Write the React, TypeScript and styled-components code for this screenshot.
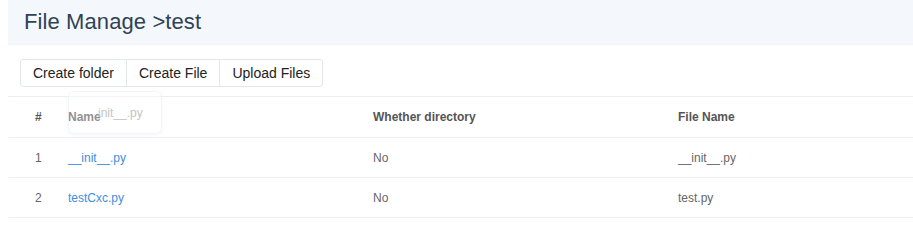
import React from "react";
import styled, { createGlobalStyle } from "styled-components";

const Global = createGlobalStyle`
  html, body { margin: 0; padding: 0; background: #fff; }
  body { padding-left: 8px; font-family: "Liberation Sans", Arial, Helvetica, sans-serif; }
`;

const Page = styled.div`
  position: relative;
  width: 905px;
`;

const Header = styled.div`
  height: 44px;
  background: #f4f8fc;
  border-bottom: 1px solid #f0f5fa;
  padding-left: 16px;
  display: flex;
  align-items: center;
`;

const Title = styled.h1`
  margin: 0;
  font-size: 22px;
  font-weight: 400;
  color: #2f4256;
  letter-spacing: 0.1px;
`;

const Toolbar = styled.div`
  display: flex;
  padding: 14px 0 0 12px;
`;

const ButtonGroup = styled.div`
  display: inline-flex;
`;

const Button = styled.button<{ $first?: boolean; $last?: boolean }>`
  height: 28px;
  padding: 0 12px;
  margin-left: ${(p) => (p.$first ? "0" : "-1px")};
  border: 1px solid #e3e6eb;
  background: #fff;
  color: #222;
  font-family: "Liberation Sans", Arial, sans-serif;
  font-size: 14px;
  border-radius: ${(p) =>
    p.$first ? "3px 0 0 3px" : p.$last ? "0 3px 3px 0" : "0"};
  cursor: pointer;
`;

const Table = styled.div`
  margin-top: 9px;
`;

const Row = styled.div<{ $head?: boolean }>`
  display: grid;
  grid-template-columns: 50px 305px 305px 1fr;
  height: ${(p) => (p.$head ? "40px" : "39px")};
  border-top: 1px solid #ebeef3;
  align-items: center;
  font-size: 12px;
  color: ${(p) => (p.$head ? "#555" : "#666")};
  font-weight: ${(p) => (p.$head ? 700 : 400)};
  &:last-child {
    border-bottom: 1px solid #ebeef3;
  }
`;

const Cell = styled.div<{ $index?: boolean }>`
  padding-left: ${(p) => (p.$index ? "27px" : "10px")};
  position: relative;
  z-index: 1;
`;

const Link = styled.a`
  color: #3d8fe0;
  text-decoration: none;
`;

const Ghost = styled.div`
  position: absolute;
  left: 60px;
  top: 91px;
  width: 94px;
  height: 43px;
  border-radius: 6px;
  border: 1px solid rgba(228, 234, 242, 0.45);
  box-shadow: 0 1px 3px rgba(200, 210, 225, 0.2);
  background: rgba(255, 255, 255, 0.35);
  box-sizing: border-box;
  z-index: 2;
  pointer-events: none;
  font-size: 12px;
  color: #c4c4c4;
  padding: 14px 0 0 29px;
`;

const rows = [
  { i: 1, name: "__init__.py", dir: "No", file: "__init__.py" },
  { i: 2, name: "testCxc.py", dir: "No", file: "test.py" },
];

export default function App() {
  return (
    <Page>
      <Global />
      <Header>
        <Title>File Manage &gt;test</Title>
      </Header>
      <Toolbar>
        <ButtonGroup>
          <Button $first>Create folder</Button>
          <Button>Create File</Button>
          <Button $last>Upload Files</Button>
        </ButtonGroup>
      </Toolbar>
      <Table>
        <Row $head>
          <Cell $index>#</Cell>
          <Cell>Name</Cell>
          <Cell>Whether directory</Cell>
          <Cell>File Name</Cell>
        </Row>
        {rows.map((r) => (
          <Row key={r.i}>
            <Cell $index>{r.i}</Cell>
            <Cell>
              <Link>{r.name}</Link>
            </Cell>
            <Cell>{r.dir}</Cell>
            <Cell>{r.file}</Cell>
          </Row>
        ))}
      </Table>
      <Ghost>init__.py</Ghost>
    </Page>
  );
}
